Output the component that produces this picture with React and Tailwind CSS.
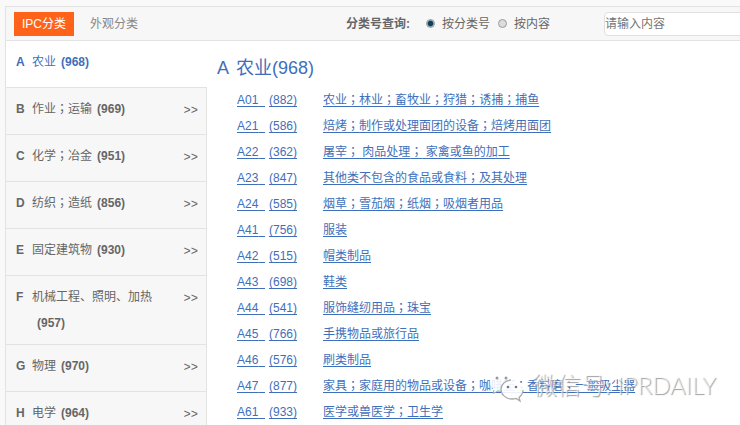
import { useState } from "react";

const sections = [
  { code: "A", name: "农业", count: 968 },
  { code: "B", name: "作业；运输", count: 969 },
  { code: "C", name: "化学；冶金", count: 951 },
  { code: "D", name: "纺织；造纸", count: 856 },
  { code: "E", name: "固定建筑物", count: 930 },
  { code: "F", name: "机械工程、照明、加热", count: 957 },
  { code: "G", name: "物理", count: 970 },
  { code: "H", name: "电学", count: 964 },
];

const classes = [
  { code: "A01", count: 882, name: "农业；林业；畜牧业；狩猎；诱捕；捕鱼" },
  { code: "A21", count: 586, name: "焙烤；制作或处理面团的设备；焙烤用面团" },
  { code: "A22", count: 362, name: "屠宰； 肉品处理； 家禽或鱼的加工" },
  { code: "A23", count: 847, name: "其他类不包含的食品或食料；及其处理" },
  { code: "A24", count: 585, name: "烟草；雪茄烟；纸烟；吸烟者用品" },
  { code: "A41", count: 756, name: "服装" },
  { code: "A42", count: 515, name: "帽类制品" },
  { code: "A43", count: 698, name: "鞋类" },
  { code: "A44", count: 541, name: "服饰缝纫用品；珠宝" },
  { code: "A45", count: 766, name: "手携物品或旅行品" },
  { code: "A46", count: 576, name: "刷类制品" },
  { code: "A47", count: 877, name: "家具；家庭用的物品或设备；咖啡壶；香料磨；一般吸尘器" },
  { code: "A61", count: 933, name: "医学或兽医学；卫生学" },
];

// the TC face centres the full-width semicolon
function Name({ text }) {
  return text.split(/(；)/).map((part, i) =>
    part === "；" ? (
      <span
        key={i}
        className="font-['Noto_Sans_CJK_TC',sans-serif] leading-none"
      >
        {part}
      </span>
    ) : (
      part
    )
  );
}

function Header({ mode, setMode }) {
  return (
    <header className="flex h-[35px] items-center overflow-hidden border-y border-[#e3e3e3] bg-[#f7f7f7] pl-2">
      <nav className="flex shrink-0 items-center">
        <button className="h-6 w-[60px] bg-[#ff6319] text-white">
          IPC分类
        </button>
        <button className="ml-4 h-6 text-[#888]">外观分类</button>
      </nav>

      <form className="ml-auto flex shrink-0 items-center text-[#666]">
        <span className="font-bold">分类号查询:</span>
        <label className="ml-4 flex items-center gap-[7px]">
          <Radio
            value="code"
            checked={mode === "code"}
            onChange={() => setMode("code")}
          />
          按分类号
        </label>
        <label className="ml-2 flex items-center gap-[7px]">
          <Radio
            value="content"
            checked={mode === "content"}
            onChange={() => setMode("content")}
          />
          按内容
        </label>
        <input
          type="text"
          aria-label="请输入内容"
          placeholder="请输入内容"
          className="ml-[54px] -mr-2 h-6 w-36 rounded-sm border border-[#e0e0e0] bg-white outline-none placeholder:text-[#757575]"
        />
      </form>
    </header>
  );
}

function Radio({ value, checked, onChange }) {
  return (
    <input
      type="radio"
      name="mode"
      value={value}
      checked={checked}
      onChange={onChange}
      className="size-[9px] appearance-none rounded-full border border-[#9a9a9a] bg-[#dcdcdc] checked:bg-[radial-gradient(circle,#0f3f5c_45%,#d5e3ea_75%)]"
    />
  );
}

function Sidebar({ active, setActive }) {
  return (
    <aside className="w-[201px] shrink-0">
      {sections.map((s) => (
        <button
          key={s.code}
          onClick={() => setActive(s.code)}
          className={`flex min-h-[47px] w-full items-start border-b border-[#e3e3e3] pt-2 pb-2 pl-[10px] text-left leading-[26px] ${
            active === s.code
              ? "bg-white pr-[9px] text-[#3f6fba]"
              : "border-r bg-[#f7f7f7] pr-2 text-[#666]"
          }`}
        >
          <span className="w-4 shrink-0 font-bold">{s.code}</span>
          <span className="flex-1">
            <Name text={s.name} />
            <b className="ml-[5px] inline-block">({s.count})</b>
          </span>
          {active !== s.code && (
            <span className="pt-0.5 font-['Liberation_Mono',monospace]">
              &gt;&gt;
            </span>
          )}
        </button>
      ))}
    </aside>
  );
}

function ClassList() {
  return (
    <main className="min-w-0 flex-1 pl-[10px] text-[#3f6fba]">
      <h1 className="flex gap-[7px] pt-[14px] text-lg leading-[26px]">
        <span>A</span>
        <span>农业(968)</span>
      </h1>
      <ul className="pt-[6px] pl-5 leading-[26px] underline-offset-2 [text-decoration-skip-ink:none]">
        {classes.map((c) => (
          <li key={c.code} className="flex h-[26px] whitespace-nowrap">
            <a href="#" className="w-8 underline">
              {c.code}&nbsp;&nbsp;
            </a>
            <a href="#" className="w-[54px] underline">
              ({c.count})
            </a>
            <a href="#" className="underline">
              <Name text={c.name} />
            </a>
          </li>
        ))}
      </ul>
    </main>
  );
}

function Watermark() {
  return (
    <div className="pointer-events-none absolute top-[371px] right-6 flex items-center gap-2">
      <svg width="36" height="32" viewBox="0 0 36 32" fill="none">
        <path
          d="M13 1C6 1 1 5.500 1 11c0 3 1.500 5.500 4 7.500L4 22l5-2.500c1.500.5 3 .5 4.500.5L24 9C22 4 18 1 13 1Z"
          fill="#fff"
          fillOpacity=".85"
        />
        <path d="M5 19l-1 3.500 5-2.500 3 .5" stroke="#aaa" />
        <path
          d="M23 9c-6 0-11 4-11 9.500S17 28 23 28c1.500 0 3-.2 4-.6l4 2.600-1-3.600c2.500-2 4-4.500 4-7.900C34 13 29 9 23 9Z"
          fill="#fff"
          fillOpacity=".9"
        />
        <path
          d="M22 9c-6 .5-10 4.500-10 9.500S17 28 23 28c1.500 0 3-.2 4-.6l4 2.600-1-3.600c2.500-2 4-4.500 4-7.400"
          stroke="#aaa"
          strokeWidth="1.300"
        />
        <circle cx="8" cy="7" r="1.500" fill="#999" />
        <circle cx="17" cy="7" r="1.500" fill="#999" />
        <circle cx="19" cy="16" r="1.300" fill="#777" />
        <circle cx="27" cy="16" r="1.300" fill="#777" />
      </svg>
      <span className="pb-1 font-['Lato','Noto_Sans_CJK_SC',sans-serif] text-2xl leading-7 font-light text-white/60 [text-shadow:1px_1px_1px_#999]">
        微信号: IPRDAILY
      </span>
    </div>
  );
}

export default function App() {
  const [mode, setMode] = useState("code");
  const [active, setActive] = useState("A");

  return (
    <div className="relative h-screen overflow-hidden bg-[#f9f9f9] pt-[6px] pl-[5px] font-['Liberation_Sans','Noto_Sans_CJK_SC',sans-serif] text-xs">
      <div className="border-l border-[#e3e3e3] bg-white">
        <Header mode={mode} setMode={setMode} />
        <div className="flex">
          <Sidebar active={active} setActive={setActive} />
          <ClassList />
        </div>
      </div>
      <Watermark />
    </div>
  );
}
